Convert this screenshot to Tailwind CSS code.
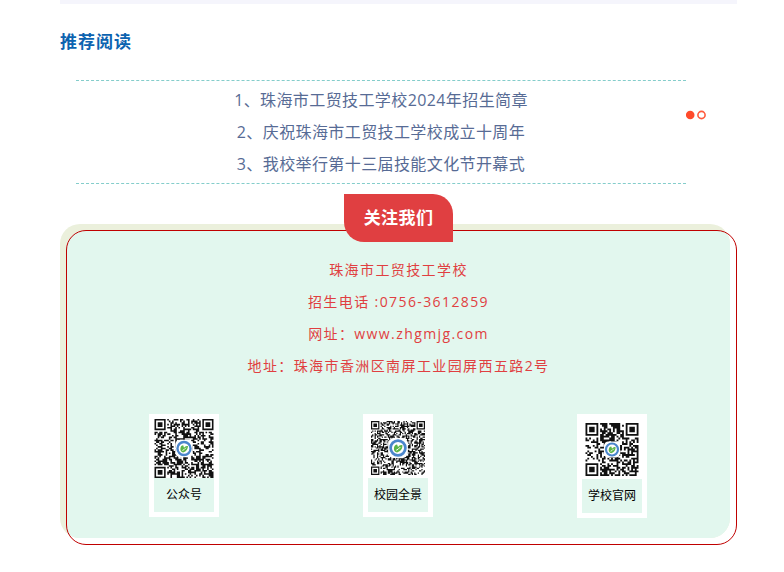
<!DOCTYPE html>
<html lang="zh-CN">
<head>
    <meta charset="UTF-8">
    <meta name="viewport" content="width=device-width, initial-scale=1.0">
    <title>推荐阅读</title>
    <script src="https://cdn.jsdelivr.net/npm/@tailwindcss/browser@4"></script>
</head>
<body class="bg-white pl-[60px] pr-[47px] font-['Open_Sans','Noto_Sans_CJK_SC',sans-serif]">
    <div class="h-1 bg-[#f5f5fc]"></div>

    <!-- Recommended articles -->
    <main>
        <h2 class="mt-[22px] text-[17px] leading-8 font-bold tracking-[1px] text-[#0c63b0]">推荐阅读</h2>
        <div class="mt-[22px] flex items-start pl-4 pr-[31px]">
            <ul class="grow border-y border-dashed border-[#84cdcb] py-[3px] text-center text-base leading-8 tracking-wide text-[#576b95]">
                <li><a href="#">1、珠海市工贸技工学校2024年招生简章</a></li>
                <li><a href="#">2、庆祝珠海市工贸技工学校成立十周年</a></li>
                <li><a href="#">3、我校举行第十三届技能文化节开幕式</a></li>
            </ul>
            <svg class="mt-[30px] h-[10px] w-5" viewBox="0 0 20 10">
                <circle cx="4.2" cy="5" r="4.3" fill="#ff4b2b"/>
                <circle cx="15.5" cy="5" r="3.6" fill="none" stroke="#ff5a3c" stroke-width="1.6"/>
            </svg>
        </div>

        <!-- Follow us -->
        <section class="relative mt-10 pb-[27px]">
            <div class="absolute top-0 left-0 right-[7px] bottom-[7px] overflow-hidden rounded-[20px] bg-[#ebf0dc]">
                <div class="absolute top-[6px] left-[6px] -right-[7px] -bottom-[7px] rounded-[20px] bg-[#e2f7ee]"></div>
            </div>
            <div class="absolute top-[6px] left-[6px] right-0 bottom-0 rounded-[20px] border border-[#c00000]"></div>

            <div class="relative flex flex-col items-center">
                <h3 class="-mt-[30px] rounded-tr-[20px] rounded-bl-[20px] bg-[#e03f41] px-5 py-2 text-[17px] leading-8 font-bold tracking-wide text-white">关注我们</h3>
                <div class="mt-3 text-center text-sm leading-8 tracking-widest text-[#e03f41]">
                    <p>珠海市工贸技工学校</p>
                    <p>招生电话 :0756-3612859</p>
                    <p>网址：www.zhgmjg.com</p>
                    <p>地址：珠海市香洲区南屏工业园屏西五路2号</p>
                </div>
                <div class="mt-8 grid w-full grid-cols-3 items-start justify-items-center pl-[17px] pr-[18px] text-xs text-black">
                    <figure class="w-[70px] bg-white p-[5px]">
                        <svg class="qr h-[59px] w-full" data-size="37" data-seed="11" data-logo="10"></svg>
                        <figcaption class="bg-[#e2f7ee] text-center leading-[34px]">公众号</figcaption>
                    </figure>
                    <figure class="w-[70px] bg-white p-[5px]">
                        <svg class="qr h-[59px] w-full pt-[2px] pb-[3px]" data-size="45" data-seed="23" data-logo="15"></svg>
                        <figcaption class="bg-[#e2f7ee] text-center leading-[34px]">校园全景</figcaption>
                    </figure>
                    <figure class="w-[70px] bg-white p-[5px]">
                        <svg class="qr h-[60px] w-full pt-1 pb-[3px]" data-size="29" data-seed="37" data-logo="8"></svg>
                        <figcaption class="bg-[#e2f7ee] text-center leading-[34px]">学校官网</figcaption>
                    </figure>
                </div>
            </div>
        </section>
    </main>

    <script>
        // Draw the QR modules, the three finder squares and the school badge
        document.querySelectorAll('.qr').forEach(svg => {
            const n = Number(svg.dataset.size);
            const logo = Number(svg.dataset.logo);
            let seed = Number(svg.dataset.seed);
            const next = () => (seed = (seed * 16807) % 2147483647) / 2147483647;
            for (let i = 0; i < 10; i++) next();

            let d = '';
            for (let y = 0; y < n; y++) {
                for (let x = 0; x < n; x++) {
                    const dark = next() < 0.52;
                    const finder = (x < 8 && y < 8) || (x > n - 9 && y < 8) || (x < 8 && y > n - 9);
                    if (dark && !finder) d += `M${x} ${y}h1v1h-1z`;
                }
            }
            [[0, 0], [n - 7, 0], [0, n - 7]].forEach(([x, y]) => {
                d += `M${x} ${y}h7v7h-7zM${x + 1} ${y + 1}v5h5v-5zM${x + 2} ${y + 2}h3v3h-3z`;
            });

            const c = n / 2;
            const r = logo / 2;
            svg.setAttribute('viewBox', `0 0 ${n} ${n}`);
            svg.innerHTML = `<path d="${d}" fill="#111"/>
                <rect x="${c - r * 1.1}" y="${c - r * 1.1}" width="${r * 2.2}" height="${r * 2.2}" rx="${r * 0.6}" fill="#fff"/>
                <g transform="translate(${c} ${c}) scale(${r / 10})">
                    <circle r="8.2" fill="#fff" stroke="#4b86cc" stroke-width="3"/>
                    <path d="M-4.500 0Q-4-4-1-4L0-1Q2-4 5-3Q5 3-1 5Q-5 4-4.500 0z" fill="#5cb548"/>
                    <path d="M-2 2.500Q0 2 2.500-1" fill="none" stroke="#fff" stroke-width="1.1"/>
                </g>`;
        });
    </script>
</body>
</html>
